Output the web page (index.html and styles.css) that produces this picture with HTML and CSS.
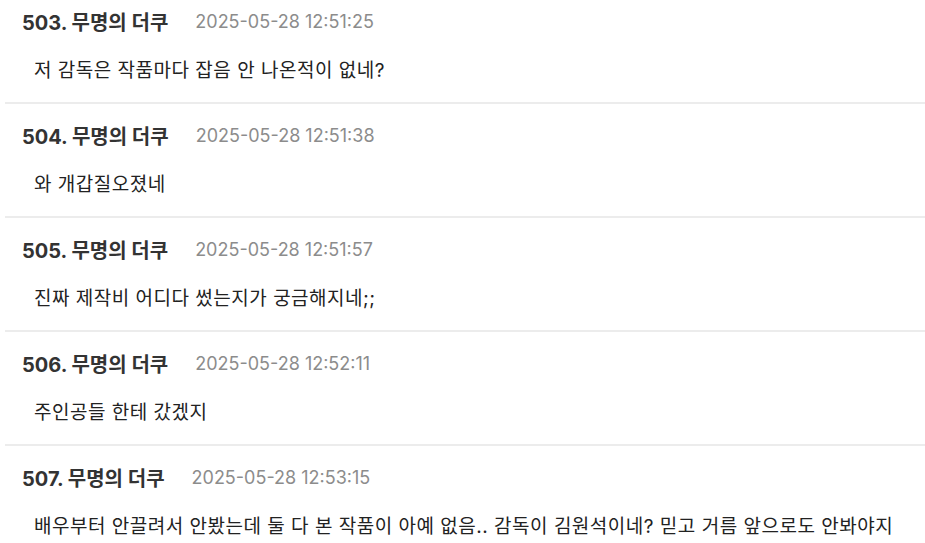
FILE: index.html
```html
<!DOCTYPE html>
<html lang="ko">
<head>
    <meta charset="UTF-8">
    <meta name="viewport" content="width=device-width, initial-scale=1.0">
    <title>댓글</title>
    <link rel="stylesheet" href="styles.css">
</head>
<body>
    <div class="comments">
        <div class="comment">
            <div class="comment-head">
                <span class="author">503. 무명의 더쿠</span>
                <span class="date">2025-05-28 12:51:25</span>
            </div>
            <div class="comment-body">저 감독은 작품마다 잡음 안 나온적이 없네?</div>
        </div>
        <div class="comment">
            <div class="comment-head">
                <span class="author">504. 무명의 더쿠</span>
                <span class="date">2025-05-28 12:51:38</span>
            </div>
            <div class="comment-body">와 개갑질오졌네</div>
        </div>
        <div class="comment">
            <div class="comment-head">
                <span class="author">505. 무명의 더쿠</span>
                <span class="date">2025-05-28 12:51:57</span>
            </div>
            <div class="comment-body">진짜 제작비 어디다 썼는지가 궁금해지네;;</div>
        </div>
        <div class="comment">
            <div class="comment-head">
                <span class="author">506. 무명의 더쿠</span>
                <span class="date">2025-05-28 12:52:11</span>
            </div>
            <div class="comment-body">주인공들 한테 갔겠지</div>
        </div>
        <div class="comment">
            <div class="comment-head">
                <span class="author">507. 무명의 더쿠</span>
                <span class="date">2025-05-28 12:53:15</span>
            </div>
            <div class="comment-body">배우부터 안끌려서 안봤는데 둘 다 본 작품이 아예 없음.. 감독이 김원석이네? 믿고 거름 앞으로도 안봐야지</div>
        </div>
    </div>
</body>
</html>
```

FILE: styles.css
```css
body {
    margin: 0;
    background: #fff;
    font-family: Inter, "Noto Sans CJK KR", sans-serif;
    overflow: hidden;
}
.comments {
    margin-top: -10px;
    padding-left: 5px;
}
.comment {
    padding: 19px 0;
    border-bottom: 2px solid #ececec;
}
.comment-head {
    display: flex;
    align-items: center;
    gap: 27px;
    padding-left: 17px;
    height: 24px;
}
.author {
    font-size: 20px;
    font-weight: bold;
    color: #333;
}
.date {
    font-size: 18px;
    color: #8c8c8c;
}
.comment-body {
    margin-top: 26px;
    padding-left: 29px;
    height: 24px;
    line-height: 24px;
    font-size: 19px;
    letter-spacing: 0.5px;
    color: #222;
    white-space: nowrap;
}
```
